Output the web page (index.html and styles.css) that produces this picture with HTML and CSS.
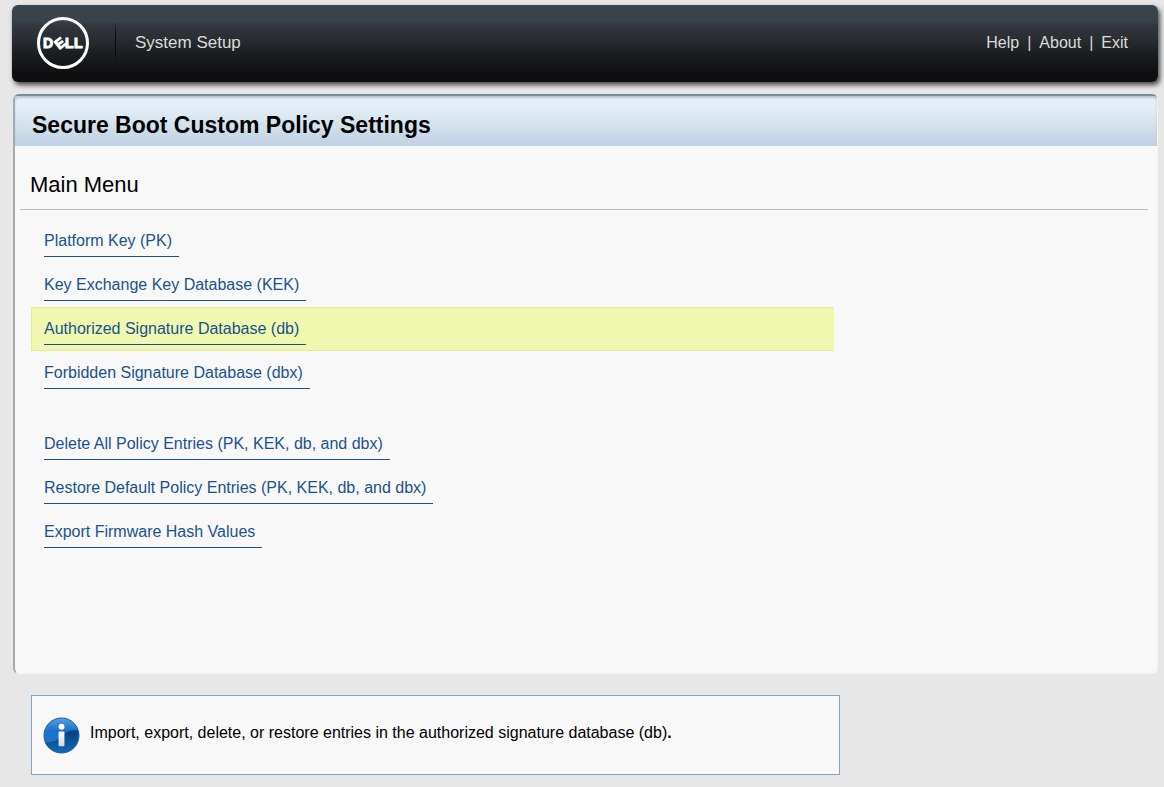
FILE: index.html
```html
<!DOCTYPE html>
<html lang="en">
<head>
    <meta charset="UTF-8">
    <meta name="viewport" content="width=device-width, initial-scale=1.0">
    <title>System Setup</title>
    <link rel="stylesheet" href="styles.css">
</head>
<body>
    <header class="topbar">
        <svg class="logo" viewBox="0 0 52 52" role="img" aria-label="Dell">
            <circle cx="26" cy="26" r="24.500" fill="none" stroke="#fff" stroke-width="3"/>
            <g class="logo-text">
                <text x="6" y="31">D</text>
                <text x="18" y="31" transform="rotate(-38 23 26)">E</text>
                <text x="28" y="31">L</text>
                <text x="37" y="31">L</text>
            </g>
        </svg>
        <span class="divider"></span>
        <span class="product">System Setup</span>
        <nav class="top-links">
            <a href="#help">Help</a>
            <span>|</span>
            <a href="#about">About</a>
            <span>|</span>
            <a href="#exit">Exit</a>
        </nav>
    </header>

    <main class="panel">
        <h1>Secure Boot Custom Policy Settings</h1>
        <h2>Main Menu</h2>
        <ul class="menu">
            <li><a href="#pk">Platform Key (PK)</a></li>
            <li><a href="#kek">Key Exchange Key Database (KEK)</a></li>
            <li class="selected"><a href="#db">Authorized Signature Database (db)</a></li>
            <li><a href="#dbx">Forbidden Signature Database (dbx)</a></li>
        </ul>
        <ul class="menu">
            <li><a href="#delete">Delete All Policy Entries (PK, KEK, db, and dbx)</a></li>
            <li><a href="#restore">Restore Default Policy Entries (PK, KEK, db, and dbx)</a></li>
            <li><a href="#export">Export Firmware Hash Values</a></li>
        </ul>
    </main>

    <aside class="info">
        <svg class="info-icon" viewBox="0 0 38 38" aria-hidden="true">
            <defs>
                <linearGradient id="ball" x1="0" y1="0" x2="0" y2="1">
                    <stop offset="0" stop-color="#5c9ddb"/>
                    <stop offset="0.35" stop-color="#1a74cb"/>
                    <stop offset="1" stop-color="#1a75c8"/>
                </linearGradient>
                <linearGradient id="shade" x1="0" y1="0" x2="0" y2="1">
                    <stop offset="0" stop-color="#063f7c"/>
                    <stop offset="1" stop-color="#1268b6"/>
                </linearGradient>
                <linearGradient id="stem" x1="0" y1="0" x2="0" y2="1">
                    <stop offset="0" stop-color="#fff"/>
                    <stop offset="1" stop-color="#d5d8dc"/>
                </linearGradient>
            </defs>
            <circle cx="19" cy="19" r="18" fill="url(#ball)" stroke="#1c5fa8"/>
            <path d="M2 26C10 26 15 24 20 19C25 14 30 13 36 14C38 24 33 36 19 36.500C11 36.500 5 32 2 26Z" fill="url(#shade)"/>
            <circle cx="19" cy="10" r="3" fill="#fff"/>
            <rect x="16" y="15" width="6" height="15" rx="1" fill="url(#stem)"/>
        </svg>
        <p>Import, export, delete, or restore entries in the authorized signature database (db)<b>.</b></p>
    </aside>
</body>
</html>
```

FILE: styles.css
```css
* {
    box-sizing: border-box;
}
body {
    margin: 0;
    padding: 5px 6px 12px 12px;
    font-family: "Liberation Sans", Arial, sans-serif;
    font-size: 16px;
    color: #000;
    background: #e7e7e7;
}
a {
    text-decoration: none;
}

/* Header */
.topbar {
    display: flex;
    align-items: center;
    height: 77px;
    padding: 0 30px 2px 25px;
    border-radius: 6px;
    background: linear-gradient(#3a444c 0%, #38424a 22%, #34363d 26%, #2a2f34 42%, #1b1f22 62%, #101416 82%, #0f0f0f 88%, #0f0f0f 100%);
    box-shadow: 2px 3px 5px rgba(0, 0, 0, 0.7);
    color: #dcdcdc;
}
.logo {
    width: 52px;
    height: 52px;
}
.logo-text {
    fill: #fff;
    stroke: #fff;
    stroke-width: 1px;
    font-size: 14px;
    font-weight: bold;
}
.divider {
    width: 1px;
    height: 44px;
    margin: 0 19px 0 26px;
    background: linear-gradient(transparent, #08090a 30%, #08090a 70%, transparent);
}
.product {
    font-size: 17px;
}
.top-links {
    display: flex;
    gap: 8px;
    margin-left: auto;
}
.top-links a {
    color: #dcdcdc;
}

/* Main panel */
.panel {
    margin: 12px 0 0 1px;
    padding-bottom: 92px;
    border: 1px solid #f2f2f2;
    border-top: 2px solid #7c8b94;
    border-left: 2px solid #a5abb3;
    border-radius: 6px;
    background: #f8f8f8;
}
h1 {
    margin: 0;
    padding: 8px 17px 0;
    font-size: 23px;
    line-height: 42px;
    border-radius: 4px 4px 0 0;
    background: linear-gradient(#e6eef7 0%, #e3eff8 22%, #dce8f1 40%, #d0dfea 65%, #c5d5e6 85%, #c2d2e4 100%);
    box-shadow: inset 0 2px 2px #b9c6d0;
}
h2 {
    margin: 0 9px 9px 5px;
    padding: 14px 10px 0;
    font-size: 22px;
    font-weight: normal;
    line-height: 49px;
    border-bottom: 1px solid #bdbdbd;
}
.menu {
    max-width: 819px;
    margin: 0 0 27px;
    padding: 0 0 0 16px;
    list-style: none;
}
.menu li {
    height: 44px;
    padding: 6px 12px;
    border: 1px solid transparent;
    border-right: 0;
}
.menu a {
    display: inline-block;
    padding-right: 7px;
    line-height: 30px;
    color: #1a5290;
    border-bottom: 1px solid #1a5290;
}
.menu .selected {
    background: #f0f7ae;
    border-color: #e3ea9c;
}

/* Help box */
.info {
    display: flex;
    align-items: center;
    gap: 10px;
    max-width: 809px;
    height: 80px;
    margin: 21px 0 0 19px;
    padding: 0 11px;
    background: #f8f8f8;
    border: 1px solid #7fa5c8;
}
.info-icon {
    width: 37px;
    height: 37px;
}
.info p {
    margin: 0 0 4px;
}
```
